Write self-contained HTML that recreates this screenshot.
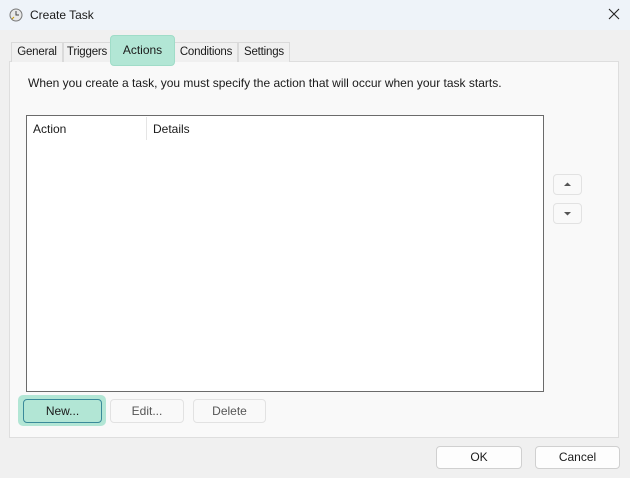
<!DOCTYPE html><html><head><style>
*{box-sizing:border-box;margin:0;padding:0}
body{width:630px;height:478px;background:#f0f0f0;font-family:"Liberation Sans",sans-serif;font-size:12px;color:#1a1a1a;position:relative;overflow:hidden}
.a{position:absolute}
.btn{position:absolute;background:#fdfdfd;border:1px solid #d0d0d0;border-radius:4px;text-align:center;font-size:12px}
.tab{position:absolute;top:42px;height:20px;border:1px solid #dadada;border-bottom:none;background:#f0f0f0;line-height:18px;text-align:center;font-size:11.5px;letter-spacing:-0.2px}
</style></head><body>
<div class="a" style="left:0;top:0;width:630px;height:30px;background:#eef3f9"></div>
<svg class="a" style="left:9px;top:8px" width="14" height="14"><circle cx="7" cy="7" r="6" fill="#e8e8e8" stroke="#777"/><path d="M7 3V7H10" stroke="#444" fill="none"/><path d="M3 11L5 9" stroke="#c90"/></svg>
<div class="a" style="left:30px;top:8px;font-size:12px">Create Task</div>
<svg class="a" style="left:608px;top:8px" width="12" height="12"><path d="M1 1L11 11M11 1L1 11" stroke="#222" stroke-width="1.1"/></svg>
<div class="a" style="left:9px;top:61px;width:610px;height:377px;background:#f9f9f9;border:1px solid #dedede"></div>
<div class="tab" style="left:11px;width:52px">General</div>
<div class="tab" style="left:63px;width:48px">Triggers</div>
<div class="tab" style="left:174px;width:64px">Conditions</div>
<div class="tab" style="left:238px;width:52px">Settings</div>
<div class="a" style="left:110px;top:35px;width:65px;height:31px;background:#b2e6d5;border-radius:4px;border:1px solid #a0dcc8"></div>
<div class="a" style="left:110px;top:43px;width:65px;text-align:center">Actions</div>
<div class="a" style="left:28px;top:76px">When you create a task, you must specify the action that will occur when your task starts.</div>
<div class="a" style="left:26px;top:115px;width:518px;height:277px;background:#fff;border:1px solid #6b6b6b"></div>
<div class="a" style="left:146px;top:117px;width:1px;height:23px;background:#e5e5e5"></div>
<div class="a" style="left:33px;top:122px">Action</div>
<div class="a" style="left:153px;top:122px">Details</div>
<div class="btn" style="left:553px;top:174px;width:29px;height:21px;background:#f9f9f9;border-color:#e2e2e2"><svg width="27" height="19"><path d="M10 11L13.5 7.5L17 11Z" fill="#555"/></svg></div>
<div class="btn" style="left:553px;top:203px;width:29px;height:21px;background:#f9f9f9;border-color:#e2e2e2"><svg width="27" height="19"><path d="M10 8L13.5 11.5L17 8Z" fill="#555"/></svg></div>
<div class="a" style="left:18px;top:395px;width:88px;height:31px;background:#b2e6d5;border-radius:5px"></div>
<div class="btn" style="left:23px;top:399px;width:60px;height:24px;left:23px;width:60px;left:23px;display:none"></div>
<div class="btn" style="left:23px;top:399px;width:79px;height:24px;background:#b2e6d5;border-color:#3a8a9a;line-height:22px">New...</div>
<div class="btn" style="left:110px;top:399px;width:74px;height:24px;background:#f9f9f9;border-color:#e2e2e2;line-height:22px;color:#555">Edit...</div>
<div class="btn" style="left:193px;top:399px;width:73px;height:24px;background:#f9f9f9;border-color:#e2e2e2;line-height:22px;color:#555">Delete</div>
<div class="btn" style="left:436px;top:446px;width:86px;height:23px;line-height:21px">OK</div>
<div class="btn" style="left:535px;top:446px;width:85px;height:23px;line-height:21px">Cancel</div>
</body></html>
